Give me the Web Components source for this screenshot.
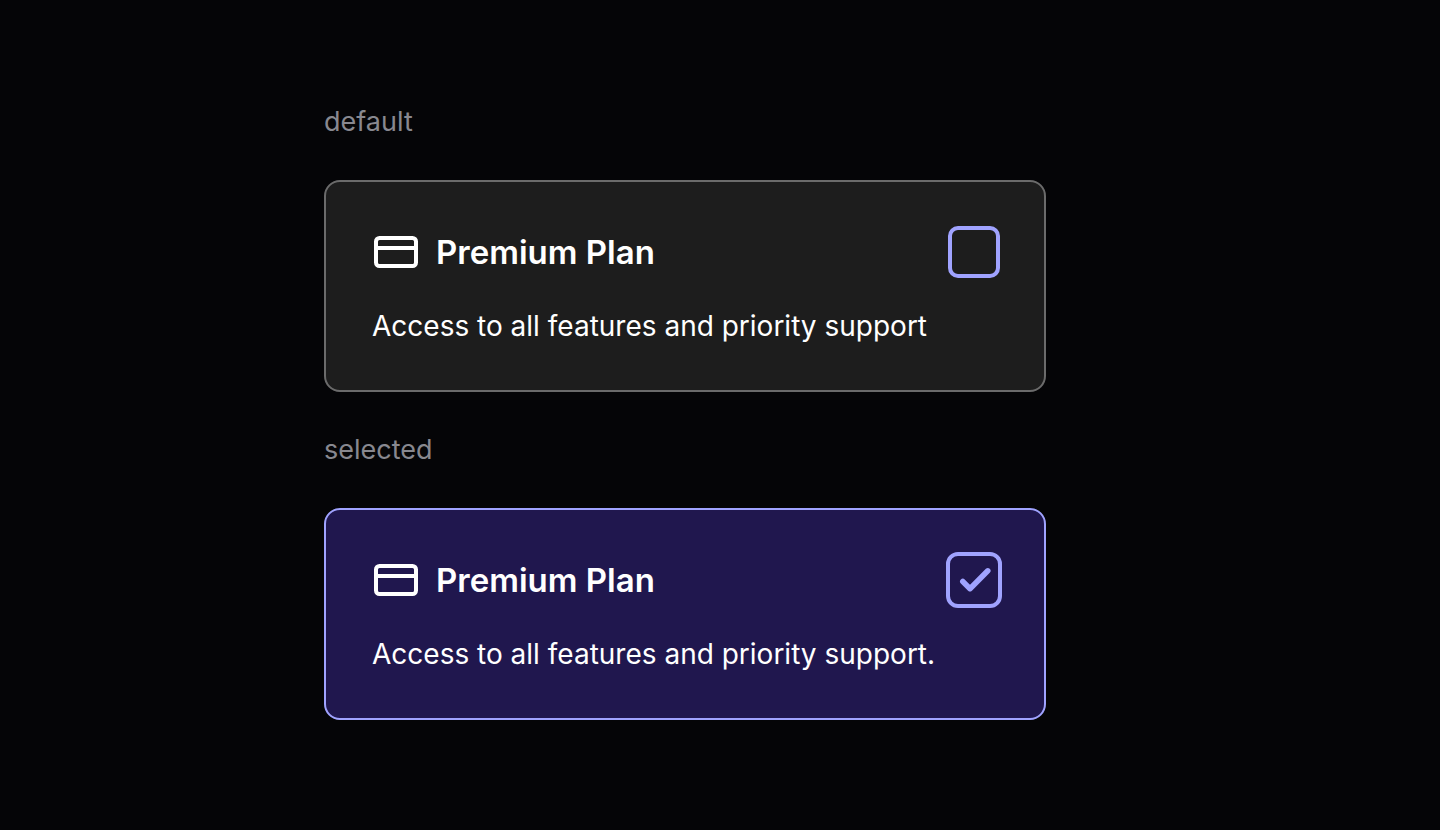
<!DOCTYPE html>
<html lang="en">
<head>
<meta charset="utf-8">
<meta name="viewport" content="width=device-width, initial-scale=1">
<title>Selectable plan card</title>
<style>
  body {
    margin: 0;
    min-height: 100vh;
    background: #050507;
    color: #fff;
    font-family: Inter, "Liberation Sans", sans-serif;
  }
</style>
</head>
<body>
<state-gallery>
  <card-state label="default">
    <plan-card>
      <card-icon slot="icon"></card-icon>
      <span slot="title">Premium Plan</span>
      <span slot="description">Access to all features and priority support</span>
    </plan-card>
  </card-state>
  <card-state label="selected">
    <plan-card selected>
      <card-icon slot="icon"></card-icon>
      <span slot="title">Premium Plan</span>
      <span slot="description">Access to all features and priority support.</span>
    </plan-card>
  </card-state>
</state-gallery>
<script>
  const define = (name, html, setup) => customElements.define(name, class extends HTMLElement {
    constructor() {
      super();
      this.attachShadow({ mode: 'open' }).innerHTML = html;
    }
    connectedCallback() {
      if (setup) setup(this, this.shadowRoot);
    }
  });

  define('card-icon', `
    <style>
      :host { display: block; width: 48px; height: 48px; }
      svg { display: block; }
    </style>
    <svg width="48" height="48" viewBox="0 0 48 48" fill="none" stroke="currentColor" stroke-width="4" aria-hidden="true">
      <rect x="4" y="10" width="40" height="28" rx="3.5"/>
      <path d="M4 20H44"/>
    </svg>`);

  define('check-box', `
    <style>
      :host { display: grid; width: 56px; height: 56px; place-items: center; }
      input {
        appearance: none;
        box-sizing: border-box;
        grid-area: 1 / 1;
        width: 52px;
        height: 52px;
        margin: 0;
        border: 4px solid #a0a3ff;
        border-radius: 10px;
        cursor: pointer;
      }
      input:checked { width: 56px; height: 56px; border-radius: 12px; }
      input:focus-visible { outline: 2px solid #fff; outline-offset: 4px; }
      svg { grid-area: 1 / 1; display: none; pointer-events: none; }
      input:checked + svg { display: block; }
    </style>
    <input type="checkbox">
    <svg width="56" height="56" viewBox="0 0 56 56" fill="none" stroke="#a0a3ff" stroke-width="5.5" stroke-linecap="round" stroke-linejoin="round" aria-hidden="true">
      <path d="M16.8 29.5L24 36.7L41.8 18.8"/>
    </svg>`, (host, root) => {
      const input = root.querySelector('input');
      input.checked = host.hasAttribute('checked');
      input.setAttribute('aria-label', host.getAttribute('label') || '');
    });

  define('plan-card', `
    <style>
      :host {
        display: flex;
        flex-direction: column;
        gap: 24px;
        box-sizing: border-box;
        padding: 42px 42px 42px 46px;
        border: 2px solid #6b6b6b;
        border-radius: 16px;
        background: #1d1d1d;
      }
      :host([selected]) { border-color: #a0a3ff; background: #20174e; }
      header { display: flex; align-items: center; gap: 16px; }
      h2 { flex: 1; margin: 0; font-size: 33px; line-height: 44px; font-weight: 600; }
      p { margin: 0; font-size: 28px; line-height: 44px; }
    </style>
    <header>
      <slot name="icon"></slot>
      <h2><slot name="title"></slot></h2>
      <check-box></check-box>
    </header>
    <p><slot name="description"></slot></p>`, (host, root) => {
      const box = root.querySelector('check-box');
      const input = box.shadowRoot.querySelector('input');
      input.checked = host.hasAttribute('selected');
      input.setAttribute('aria-label', host.querySelector('[slot=title]').textContent);
      input.addEventListener('change', () => host.toggleAttribute('selected', input.checked));
    });

  define('card-state', `
    <style>
      :host { display: flex; flex-direction: column; gap: 36px; }
      h1 { margin: 0; color: #88888f; font-size: 27px; line-height: 44px; font-weight: 400; }
    </style>
    <h1></h1>
    <slot></slot>`, (host, root) => {
      root.querySelector('h1').textContent = host.getAttribute('label');
    });

  define('state-gallery', `
    <style>
      :host { display: block; padding: 100px 24px 100px 22.5%; }
      main { display: flex; flex-direction: column; gap: 36px; max-width: 722px; }
    </style>
    <main><slot></slot></main>`);
</script>
</body>
</html>
